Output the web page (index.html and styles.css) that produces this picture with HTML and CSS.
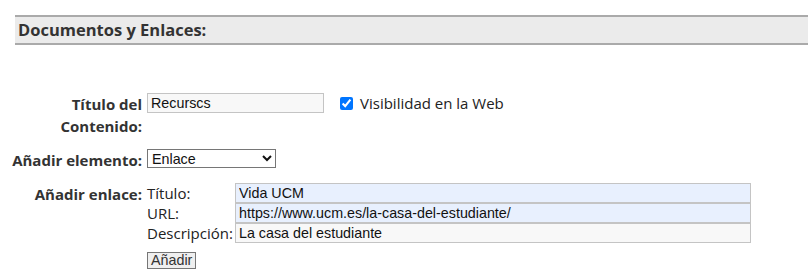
FILE: index.html
```html
<!DOCTYPE html>
<html lang="es">
<head>
    <meta charset="UTF-8">
    <title>Documentos y Enlaces</title>
    <link rel="stylesheet" href="styles.css">
</head>
<body>
    <div class="page">
        <h2 class="section-title">Documentos y Enlaces:</h2>

        <form class="doc-form">
            <div class="row row-title">
                <label class="row-label" for="titulo">Título del<br>Contenido:</label>
                <div class="row-field">
                    <input type="text" id="titulo" class="text-input short" value="Recurscs">
                    <label class="check">
                        <input type="checkbox" checked>
                        Visibilidad en la Web
                    </label>
                </div>
            </div>

            <div class="row row-select">
                <label class="row-label" for="elemento">Añadir elemento:</label>
                <div class="row-field">
                    <select id="elemento" class="select">
                        <option>Enlace</option>
                        <option>Documento</option>
                    </select>
                </div>
            </div>

            <div class="row row-link">
                <span class="row-label">Añadir enlace:</span>
                <div class="link-grid">
                    <label for="lnkTitulo">Título:</label>
                    <input type="text" id="lnkTitulo" class="text-input filled" value="Vida UCM">
                    <label for="lnkUrl">URL:</label>
                    <input type="text" id="lnkUrl" class="text-input filled" value="https://www.ucm.es/la-casa-del-estudiante/">
                    <label for="lnkDesc">Descripción:</label>
                    <input type="text" id="lnkDesc" class="text-input" value="La casa del estudiante">
                    <div class="link-actions">
                        <button type="button" class="btn">Añadir</button>
                    </div>
                </div>
            </div>
        </form>
    </div>
</body>
</html>
```

FILE: styles.css
```css
body {
    margin: 0;
    font-family: "Open Sans", "Noto Sans", sans-serif;
    color: #222;
    background-color: #fff;
}

.page {
    padding-top: 15px;
}

.section-title {
    margin: 0 0 0 15px;
    padding: 0 3px;
    height: 26px;
    line-height: 26px;
    font-size: 16.5px;
    font-weight: bold;
    color: #333;
    background-color: #ebebeb;
    border-top: 2px solid #aaa;
    border-bottom: 2px solid #aaa;
}

.doc-form {
    margin-top: 48px;
}

.row {
    display: flex;
    gap: 5px;
}

.row-label {
    flex-shrink: 0;
    width: 142px;
    text-align: right;
    white-space: nowrap;
    font-size: 15px;
    font-weight: bold;
    line-height: 22px;
    color: #333;
}

.row-field {
    display: flex;
    align-items: flex-start;
    gap: 16px;
}

.row-select {
    margin-top: 12px;
}

.row-link {
    margin-top: 12px;
}

.text-input {
    box-sizing: border-box;
    height: 20px;
    margin: 0;
    padding: 0 3px;
    font-family: "Liberation Sans", Arial, sans-serif;
    font-size: 14.3px;
    color: #111;
    background-color: #f8f8f8;
    border: 1px solid #c4c4c4;
}

.text-input.short {
    width: 177px;
}

.text-input.filled {
    background-color: #e8f0fe;
}

.check {
    display: flex;
    align-items: center;
    gap: 7px;
    font-size: 15px;
    line-height: 20px;
}

.check input {
    margin: 0;
    width: 13px;
    height: 13px;
    accent-color: #0075ff;
}

.select {
    box-sizing: border-box;
    width: 129px;
    height: 19px;
    margin: 0;
    font-family: "Liberation Sans", Arial, sans-serif;
    font-size: 14.3px;
    color: #111;
    background-color: #fff;
    border: 1px solid #767676;
    border-radius: 0;
}

.link-grid {
    display: grid;
    grid-template-columns: 88px 516px;
    font-size: 15px;
    line-height: 20px;
}

.link-grid label {
    color: #222;
}

.link-actions {
    grid-column: 1 / 3;
    margin-top: 6px;
}

.btn {
    padding: 0 3px;
    height: 17px;
    font-family: "Liberation Sans", Arial, sans-serif;
    font-size: 14.3px;
    line-height: 15px;
    color: #333;
    background-color: #efefef;
    border: 1px solid #767676;
    border-radius: 0;
}
```
